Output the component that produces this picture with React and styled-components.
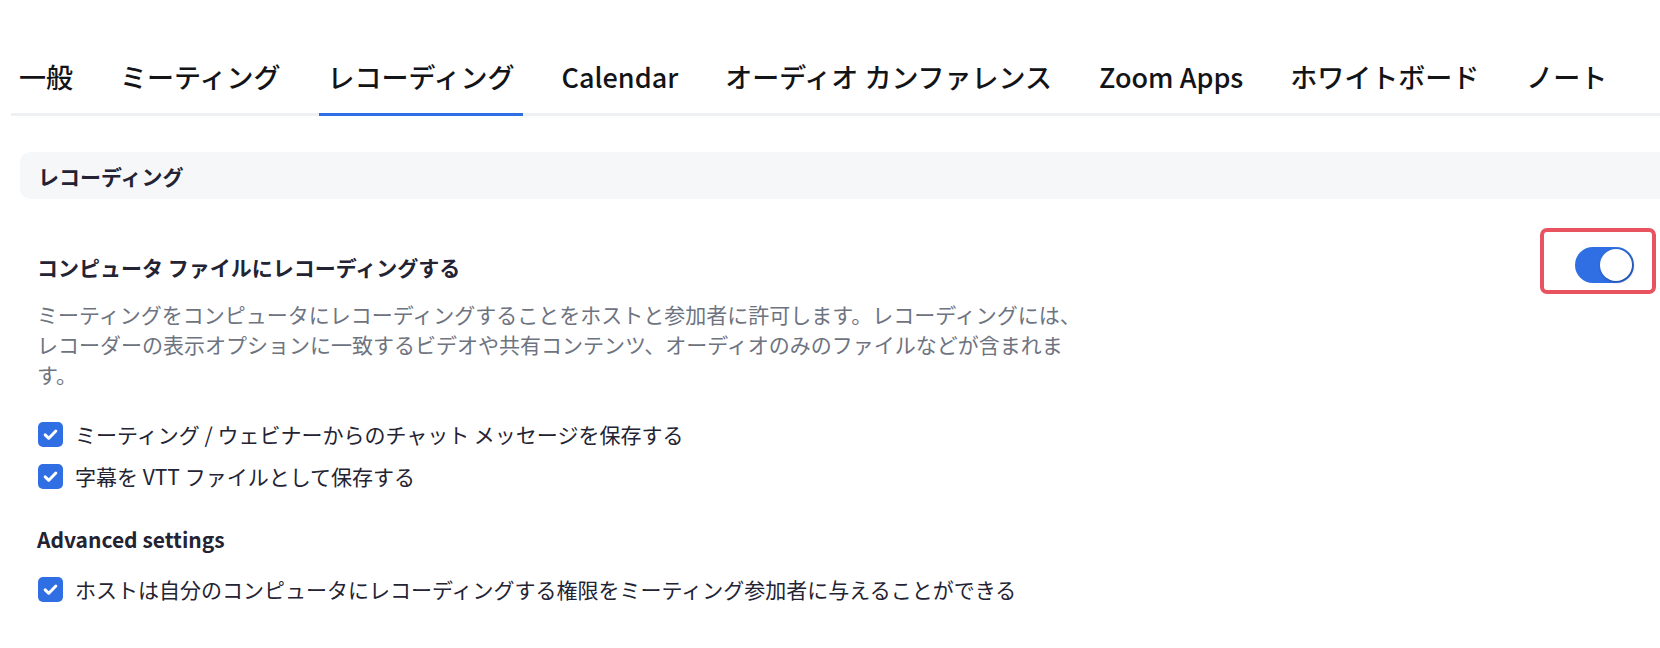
import React from 'react';
import styled, { createGlobalStyle } from 'styled-components';

const GlobalStyle = createGlobalStyle`
  html, body {
    margin: 0;
    padding: 0;
    background: #fff;
    overflow: hidden;
  }
  body {
    font-family: "Noto Sans CJK JP", "Noto Sans", sans-serif;
    color: #232333;
  }
`;

const Page = styled.div`
  width: 1660px;
  height: 648px;
  padding-top: 59px;
  box-sizing: border-box;
`;

const TabBar = styled.ul`
  display: flex;
  gap: 31px;
  margin: 0 0 0 11px;
  padding: 0;
  list-style: none;
  border-bottom: 3px solid #eff0f4;
`;

const Tab = styled.li`
  padding: 0 8px 18px;
  margin-bottom: -3px;
  font-size: 27px;
  line-height: 36px;
  font-weight: 500;
  color: #131417;
  white-space: nowrap;
  border-bottom: 3px solid ${(p) => (p.$active ? '#2f6fe3' : 'transparent')};
`;

const Content = styled.div`
  padding-left: 20px;
  margin-top: 36px;
`;

const SectionHeader = styled.div`
  display: flex;
  align-items: center;
  height: 47px;
  padding: 0 18px;
  border-radius: 10px 0 0 10px;
  background: #f6f7f9;
  font-size: 21px;
  font-weight: 700;
  color: #232333;
`;

const Setting = styled.div`
  display: flex;
  justify-content: space-between;
  align-items: flex-start;
  padding: 29px 4px 0 17px;
`;

const Main = styled.div`
  display: flex;
  flex-direction: column;
  padding-top: 24px;
`;

const Title = styled.div`
  font-size: 21px;
  line-height: 30px;
  font-weight: 700;
  color: #232333;
`;

const Description = styled.p`
  margin: 17px 0 0;
  width: 1045px;
  font-size: 21px;
  line-height: 30px;
  color: #6e7380;
`;

const CheckList = styled.div`
  display: flex;
  flex-direction: column;
  gap: 12px;
  margin-top: ${(p) => p.$top}px;
`;

const CheckRow = styled.label`
  display: flex;
  align-items: center;
  gap: 12px;
  padding-left: 1px;
  font-size: 21px;
  line-height: 30px;
  color: #232333;
`;

const Box = styled.span`
  display: flex;
  align-items: center;
  justify-content: center;
  width: 25px;
  height: 25px;
  flex: none;
  border-radius: 5px;
  background: #2f6fe3;
`;

const SubTitle = styled.div`
  margin-top: 33px;
  font-size: 21px;
  line-height: 30px;
  font-weight: 700;
  color: #232333;
`;

const Highlight = styled.div`
  padding: 15px 18px 7px 31px;
  border: 4px solid #e9525f;
  border-radius: 7px;
`;

const Switch = styled.div`
  display: flex;
  align-items: center;
  justify-content: ${(p) => (p.$on ? 'flex-end' : 'flex-start')};
  width: 59px;
  height: 36px;
  padding: 2px;
  box-sizing: border-box;
  border-radius: 18px;
  background: ${(p) => (p.$on ? '#2f6fe3' : '#c9ccd3')};
`;

const Knob = styled.span`
  width: 32px;
  height: 32px;
  border-radius: 50%;
  background: #fff;
  box-shadow: 1px 1px 3px rgba(0, 0, 0, 0.35);
`;

const tabs = ['一般', 'ミーティング', 'レコーディング', 'Calendar', 'オーディオ カンファレンス', 'Zoom Apps', 'ホワイトボード', 'ノート'];

function Check({ children }) {
  return (
    <CheckRow>
      <Box>
        <svg width="19" height="19" viewBox="0 0 16 16" fill="none">
          <polyline points="3.5,8.3 6.6,11.2 12.5,5.1" stroke="#fff" strokeWidth="2.5" strokeLinecap="round" strokeLinejoin="round" />
        </svg>
      </Box>
      {children}
    </CheckRow>
  );
}

export default function App() {
  return (
    <Page>
      <GlobalStyle />
      <TabBar>
        {tabs.map((t) => (
          <Tab key={t} $active={t === 'レコーディング'}>{t}</Tab>
        ))}
      </TabBar>
      <Content>
        <SectionHeader>レコーディング</SectionHeader>
        <Setting>
          <Main>
            <Title>コンピュータ ファイルにレコーディングする</Title>
            <Description>
              ミーティングをコンピュータにレコーディングすることをホストと参加者に許可します。レコーディングには、レコーダーの表示オプションに一致するビデオや共有コンテンツ、オーディオのみのファイルなどが含まれます。
            </Description>
            <CheckList $top={30}>
              <Check>ミーティング / ウェビナーからのチャット メッセージを保存する</Check>
              <Check>字幕を VTT ファイルとして保存する</Check>
            </CheckList>
            <SubTitle>Advanced settings</SubTitle>
            <CheckList $top={20}>
              <Check>ホストは自分のコンピュータにレコーディングする権限をミーティング参加者に与えることができる</Check>
            </CheckList>
          </Main>
          <Highlight>
            <Switch $on>
              <Knob />
            </Switch>
          </Highlight>
        </Setting>
      </Content>
    </Page>
  );
}
